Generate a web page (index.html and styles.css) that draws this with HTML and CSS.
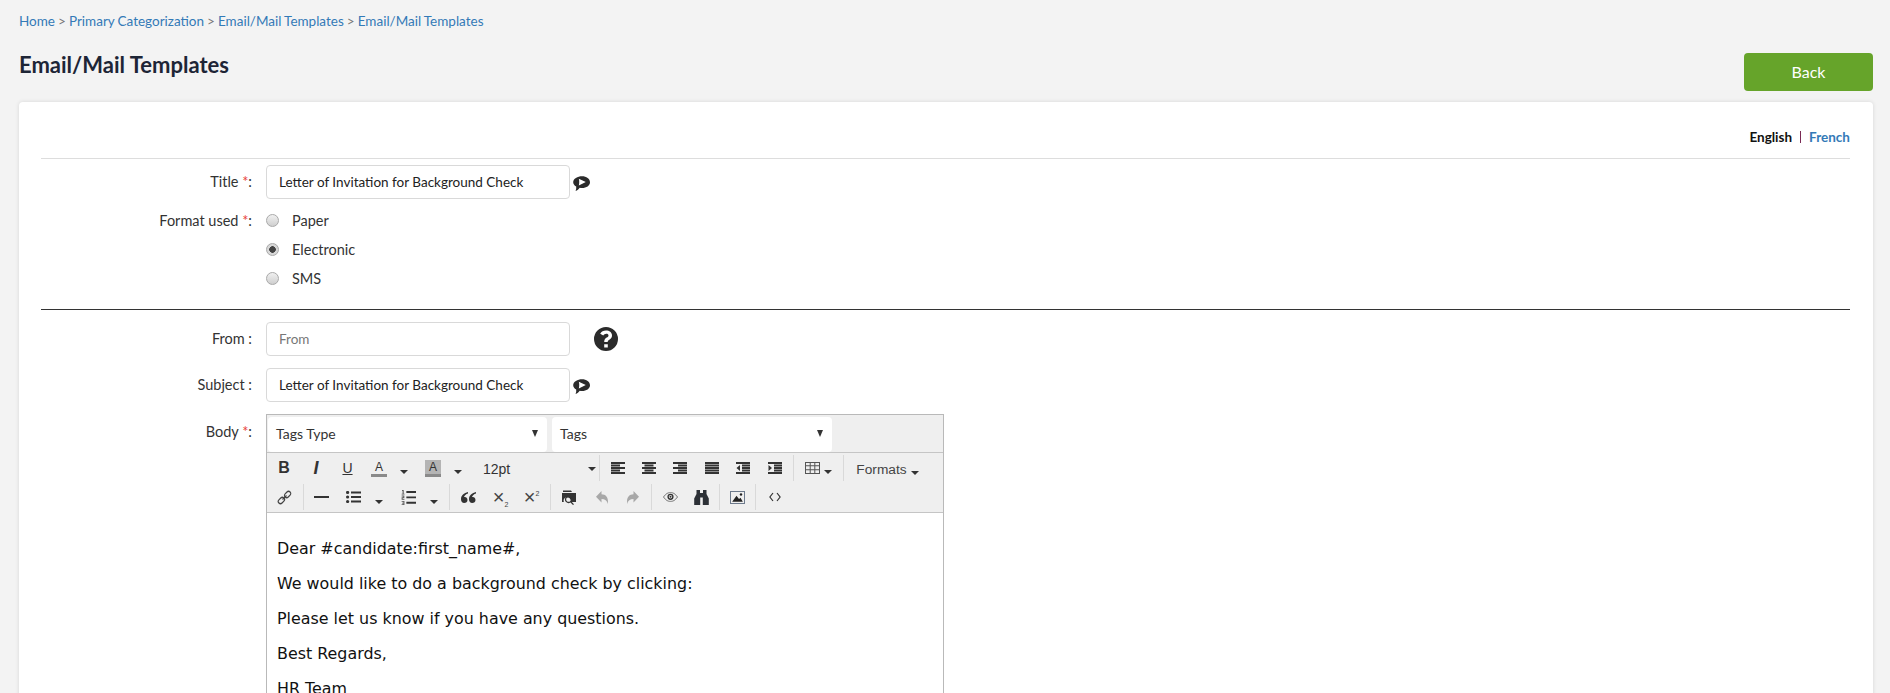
FILE: index.html
```html
<!DOCTYPE html>
<html lang="en">
<head>
<meta charset="utf-8">
<title>Email/Mail Templates</title>
<link rel="stylesheet" href="styles.css">
</head>
<body>
<svg class="defs" width="0" height="0" aria-hidden="true">
  <defs>
    <symbol id="bubble" viewBox="0 0 17 15">
      <path fill="#2b2b2b" d="M9 0.300C13.400 0.300 17 2.900 17 6.200C17 9.500 13.400 12 9 12C8.200 12 7.400 11.900 6.700 11.700C5.800 13.300 4.200 14.500 2.600 15C3.200 13.600 3.400 12 3.200 10.500C1.300 9.400 0.200 7.900 0.200 6.200C0.200 2.900 4.600 0.300 9 0.300Z"/>
      <path fill="#fff" d="M5.800 2.800L12.800 6.100L5.800 9.400C6.400 7.300 6.400 4.900 5.800 2.800Z"/>
    </symbol>
    <symbol id="help" viewBox="0 0 24 24">
      <path fill="#2b2b2b" fill-rule="evenodd" d="M12 0a12 12 0 1 0 0 24a12 12 0 0 0 0-24ZM10.200 17.200h3.600v3.400h-3.600ZM12 3.600c3.400 0 6 2 6 4.900c0 2.200-1.200 3.300-2.700 4.200c-1.100.7-1.600 1.200-1.600 2.400h-3.500c0-2.400.9-3.500 2.500-4.500c1.100-.7 1.800-1.200 1.800-2.200c0-1-.9-1.700-2.200-1.700c-1.300 0-2.300.7-3 1.800L6.200 6.700C7.400 4.800 9.400 3.600 12 3.600Z"/>
    </symbol>
    <symbol id="al" viewBox="0 0 14 12"><path fill="#333" d="M0 0h14v2H0zM0 2.500h9v2H0zM0 5h14v2H0zM0 7.500h9v2H0zM0 10h14v2H0z"/></symbol>
    <symbol id="ac" viewBox="0 0 14 12"><path fill="#333" d="M0 0h14v2H0zM2.500 2.500h9v2h-9zM0 5h14v2H0zM2.500 7.500h9v2h-9zM0 10h14v2H0z"/></symbol>
    <symbol id="ar" viewBox="0 0 14 12"><path fill="#333" d="M0 0h14v2H0zM5 2.500h9v2H5zM0 5h14v2H0zM5 7.500h9v2H5zM0 10h14v2H0z"/></symbol>
    <symbol id="aj" viewBox="0 0 14 12"><path fill="#333" d="M0 0h14v2H0zM0 2.500h14v2H0zM0 5h14v2H0zM0 7.500h14v2H0zM0 10h14v2H0z"/></symbol>
    <symbol id="out" viewBox="0 0 14 12"><path fill="#333" d="M0 0h14v2H0zM6 2.500h8v2H6zM6 5h8v2H6zM6 7.500h8v2H6zM0 10h14v2H0zM4 3v6L0.500 6z"/></symbol>
    <symbol id="ind" viewBox="0 0 14 12"><path fill="#333" d="M0 0h14v2H0zM6 2.500h8v2H6zM6 5h8v2H6zM6 7.500h8v2H6zM0 10h14v2H0zM0.500 3v6L4 6z"/></symbol>
    <symbol id="table" viewBox="0 0 15 12"><path fill="#555" d="M0 0h15v12H0zM1 1v2.300h3.700V1zM5.700 1v2.300h3.600V1zM10.300 1v2.300H14V1zM1 4.300v2.900h3.700V4.300zM5.700 4.300v2.900h3.600V4.300zM10.300 4.300v2.900H14V4.300zM1 8.200V11h3.700V8.200zM5.700 8.200V11h3.600V8.200zM10.300 8.200V11H14V8.200z" fill-rule="evenodd"/></symbol>
    <symbol id="link" viewBox="0 0 15 15"><g fill="none" stroke="#444" stroke-width="1.200"><rect x="0.900" y="8.300" width="7" height="4.400" rx="2.200" transform="rotate(-45 4.400 10.500)"/><rect x="7.100" y="2.300" width="7" height="4.400" rx="2.200" transform="rotate(-45 10.600 4.500)"/><path d="M5.500 9.500L9.500 5.500"/></g></symbol>
    <symbol id="bul" viewBox="0 0 15 12"><path fill="#333" d="M5 0.500h10v2H5zM5 5h10v2H5zM5 9.500h10v2H5z"/><circle fill="#333" cx="1.600" cy="1.500" r="1.600"/><circle fill="#333" cx="1.600" cy="6" r="1.600"/><circle fill="#333" cx="1.600" cy="10.500" r="1.600"/></symbol>
    <symbol id="num" viewBox="0 0 14 14"><path fill="#333" d="M5 1h9v1.800H5zM5 6h9v1.800H5zM5 11h9v1.800H5z"/><path fill="#555" d="M1 0h1.500v3.500H3.300v.8H.6v-.8h.9V1H1zM.6 5.200h2.500v2.300H1.500v.7h1.700V9H.6V6.800h1.600v-.8H.6zM.6 10.200h2.600V14H.6v-.8h1.700v-.7H1v-.7h1.300V11H.6z"/></symbol>
    <symbol id="quote" viewBox="0 0 15 11"><path fill="#333" d="M7 0C3 1 0 3.300 0 7.200C0 9.400 1.300 11 3.200 11S6.500 9.700 6.500 7.900C6.500 6.100 5.200 5 3.800 5C3.500 5 3.200 5 3 5.100C3.400 3.500 5 2.300 7 1.600zM15 0C11 1 8 3.300 8 7.200C8 9.400 9.300 11 11.200 11S14.500 9.700 14.500 7.900C14.500 6.100 13.200 5 11.800 5C11.500 5 11.200 5 11 5.100C11.400 3.500 13 2.300 15 1.600z"/></symbol>
    <symbol id="folder" viewBox="0 0 15 15"><path fill="#333" d="M0 3h14v9H8.800a3.800 3.800 0 0 0-5-4.500a3.800 3.800 0 0 0-2 4.500H0zM1 0.500h8L10 2H1z"/><path fill="none" stroke="#333" stroke-width="1.300" d="M6.500 6.500a3 3 0 1 0 .1 6a3 3 0 0 0-.1-6zM8.700 11.800L11.500 14.600"/></symbol>
    <symbol id="undo" viewBox="0 0 12 13"><path fill="#a8a8a8" d="M5.500 0V3.200C9.500 3.200 12 6 12 10.500L12 13C11 9.500 9 8 5.500 8V11.500L0 5.700Z"/></symbol>
    <symbol id="redo" viewBox="0 0 12 13"><path fill="#a8a8a8" d="M6.500 0V3.200C2.500 3.200 0 6 0 10.500L0 13C1 9.500 3 8 6.500 8V11.500L12 5.700Z"/></symbol>
    <symbol id="eye" viewBox="0 0 15 10"><path fill="none" stroke="#666" stroke-width=".9" d="M0.500 5C3 1.500 5 .6 7.500.6S12 1.500 14.500 5C12 8.500 10 9.400 7.500 9.400S3 8.500 .5 5Z"/><circle fill="none" stroke="#333" stroke-width="1.400" cx="7.500" cy="4.800" r="2.400"/><circle fill="#333" cx="7.500" cy="4.800" r="1"/></symbol>
    <symbol id="bino" viewBox="0 0 15 15"><path fill="#2c3036" d="M2.500 0H6V3H9V0H12.500V4L14.800 8.500V15H8.800V7.500H6.200V15H.2V8.500L2.500 4Z"/></symbol>
    <symbol id="img" viewBox="0 0 15 13"><path fill="#6d7a8c" fill-rule="evenodd" d="M0 0h15v13H0zM1 1v11h13V1z"/><path fill="#222" d="M2.200 10.800L6.500 4.800L9 8L10.500 6.800L12.800 10.800z"/><circle fill="#222" cx="11" cy="3.500" r="1.200"/></symbol>
    <symbol id="code" viewBox="0 0 12 10"><path fill="none" stroke="#333" stroke-width="1.200" d="M4 1L.9 5L4 9M8 1L11.100 5L8 9"/></symbol>
  </defs>
</svg>

<nav class="crumbs"><a href="#">Home</a> &gt; <a href="#">Primary Categorization</a> &gt; <a href="#">Email/Mail Templates</a> &gt; <a href="#">Email/Mail Templates</a></nav>

<header class="head">
  <h1>Email/Mail Templates</h1>
  <a class="back" href="#">Back</a>
</header>

<main class="card">
  <div class="lang"><strong>English</strong><i class="pipe"></i><a href="#">French</a></div>

  <div class="row first">
    <label class="lbl">Title <span class="req">*</span>:</label>
    <input class="field" type="text" value="Letter of Invitation for Background Check">
    <svg class="ic-bubble"><use href="#bubble"/></svg>
  </div>

  <div class="row radios">
    <label class="lbl line">Format used <span class="req">*</span>:</label>
    <div class="opts">
      <label class="opt"><input type="radio" name="fmt"><span>Paper</span></label>
      <label class="opt"><input type="radio" name="fmt" checked><span>Electronic</span></label>
      <label class="opt"><input type="radio" name="fmt"><span>SMS</span></label>
    </div>
  </div>

  <hr class="dark">

  <div class="row">
    <label class="lbl">From :</label>
    <input class="field" type="text" placeholder="From">
    <svg class="ic-help"><use href="#help"/></svg>
  </div>

  <div class="row gap">
    <label class="lbl">Subject :</label>
    <input class="field" type="text" value="Letter of Invitation for Background Check">
    <svg class="ic-bubble"><use href="#bubble"/></svg>
  </div>

  <div class="row gap body-row">
    <label class="lbl top">Body <span class="req">*</span>:</label>
    <div class="editor">
      <div class="tags">
        <div class="sel">Tags Type<i class="arrow"></i></div>
        <div class="sel">Tags<i class="arrow"></i></div>
      </div>
      <div class="tools">
        <div class="tr r1">
          <span class="b w32 tb">B</span>
          <span class="b w32 ti">I</span>
          <span class="b w31 tu">U</span>
          <span class="b w32"><span class="ta">A</span></span><span class="b w18"><i class="caret"></i></span>
          <span class="b w4"></span>
          <span class="b w32"><span class="ta hl">A</span></span><span class="b w18"><i class="caret"></i></span>
          <span class="b w4"></span>
          <span class="size">12pt<i class="caret"></i></span>
          <i class="sep"></i>
          <span class="b wa"><svg class="i14"><use href="#al"/></svg></span>
          <span class="b wa"><svg class="i14"><use href="#ac"/></svg></span>
          <span class="b wa"><svg class="i14"><use href="#ar"/></svg></span>
          <span class="b wa"><svg class="i14"><use href="#aj"/></svg></span>
          <span class="b wa"><svg class="i14"><use href="#out"/></svg></span>
          <span class="b wa"><svg class="i14"><use href="#ind"/></svg></span>
          <i class="sep"></i>
          <span class="b w44"><svg class="i15"><use href="#table"/></svg><i class="caret tight"></i></span>
          <i class="sep"></i>
          <span class="fmts">Formats<i class="caret tight"></i></span>
        </div>
        <div class="tr r2">
          <span class="b w32"><svg class="i15s"><use href="#link"/></svg></span>
          <i class="sep"></i>
          <span class="b w30"><i class="rule"></i></span>
          <span class="b w34"><svg class="i15"><use href="#bul"/></svg></span><span class="b w18 lo"><i class="caret"></i></span><span class="b w3"></span>
          <span class="b w34"><svg class="i15s"><use href="#num"/></svg></span><span class="b w18 lo"><i class="caret"></i></span><span class="b w3"></span>
          <i class="sep"></i>
          <span class="b w33"><svg class="iq"><use href="#quote"/></svg></span>
          <span class="b w31 tx"><span>&times;<sub>2</sub></span></span>
          <span class="b w31 tx"><span>&times;<sup>2</sup></span></span>
          <i class="sep"></i>
          <span class="b w33"><svg class="i15s"><use href="#folder"/></svg></span>
          <span class="b w31"><svg class="iu"><use href="#undo"/></svg></span>
          <span class="b w31"><svg class="iu"><use href="#redo"/></svg></span>
          <i class="sep"></i>
          <span class="b w32"><svg class="ie"><use href="#eye"/></svg></span>
          <span class="b w30"><svg class="ib"><use href="#bino"/></svg></span>
          <i class="sep"></i>
          <span class="b w30"><svg class="im"><use href="#img"/></svg></span>
          <i class="sep"></i>
          <span class="b w34"><svg class="ic"><use href="#code"/></svg></span>
        </div>
      </div>
      <div class="content">
        <p>Dear #candidate:first_name#,</p>
        <p>We would like to do a background check by clicking:</p>
        <p>Please let us know if you have any questions.</p>
        <p>Best Regards,</p>
        <p>HR Team</p>
      </div>
    </div>
  </div>
</main>
</body>
</html>
```

FILE: styles.css
```css
* { box-sizing: border-box; }
html, body { height: 693px; overflow: hidden; }
body {
  margin: 0;
  padding: 0 17px 0 19px;
  background: #f3f3f3;
  color: #333;
  font: 14px/18px Lato, sans-serif;
}
a { color: #337ab7; text-decoration: none; }
.defs { position: absolute; }

.crumbs { padding-top: 12px; height: 30px; color: #777; font-size: 13.500px; word-spacing: -0.400px; }

.head { display: flex; justify-content: space-between; align-items: center; height: 38px; margin-top: 23px; }
.head h1 { margin: 0; font-size: 22px; line-height: 26px; font-weight: 700; color: #1d2536; position: relative; top: -7px; }
.back {
  width: 129px; height: 38px; line-height: 38px; text-align: center;
  background: #66a42a; color: #fff; font-size: 16px; border-radius: 4px;
}

.card {
  margin-top: 11px;
  height: 620px;
  padding: 0 23px 0 22px;
  background: #fff;
  border-radius: 4px;
  box-shadow: 0 0 4px rgba(0,0,0,.12);
}

.lang {
  display: flex; justify-content: flex-end; align-items: center;
  height: 57px; padding-top: 14px;
  border-bottom: 1px solid #ddd;
  font-size: 13.500px; color: #111;
}
.lang strong { font-weight: 700; color: #111; }
.lang a { font-weight: 700; }
.pipe { width: 1px; height: 12px; background: #7a2a55; margin: 0 8px; }

.row { display: flex; align-items: center; }
.row.first { margin-top: 6px; }
.row.gap { margin-top: 12px; }
.row.radios { align-items: flex-start; margin-top: 7px; }
.row.body-row { align-items: flex-start; }

.lbl { width: 211px; margin-right: 14px; text-align: right; color: #333; font-size: 14.500px; flex: none; }
.lbl.line { line-height: 29px; }
.lbl.top { padding-top: 9px; }
.req { color: #e8453c; }

.field {
  width: 304px; height: 34px; padding: 0 12px 0 12px;
  border: 1px solid #d9d9d9; border-radius: 4px; background: #fff;
  color: #222; font: 13.500px Lato, sans-serif; outline: 0;
}
.field::placeholder { color: #777; opacity: 1; }
.ic-bubble { width: 17px; height: 15px; margin: 3px 0 0 3px; }
.ic-help { width: 24px; height: 24px; margin-left: 24px; }

.opt { display: flex; align-items: center; height: 29px; font-size: 14.500px; }
.opt input {
  appearance: none; margin: 0 13px 0 0; width: 13px; height: 13px; border-radius: 50%;
  border: 1px solid #a9a9a9; background: linear-gradient(#f0f0f0, #cfcfcf);
}
.opt input:checked { background: radial-gradient(circle, #444 0 3px, #d8d8d8 3.600px); }

.dark { margin: 16px 0 12px; border: 0; border-top: 1px solid #333; }

.editor { width: 678px; height: 400px; border: 1px solid #b9b9b9; border-bottom: 0; flex: none; background: #fff; }
.tags { display: flex; gap: 5px; height: 38px; padding: 2px 0 0 1px; background: #efefef; border-bottom: 1px solid #c5c5c5; }
.sel {
  position: relative; height: 35px; line-height: 34px; padding-left: 8px;
  background: #fff; border-radius: 4px; font-size: 14px; color: #333;
}
.sel:first-child { width: 279px; }
.sel:nth-child(2) { width: 280px; }
.arrow {
  position: absolute; right: 9px; top: 13px;
  border-style: solid; border-width: 7px 3.500px 0; border-color: #333 transparent transparent;
}
.tools { height: 60px; background: #efefef; border-bottom: 1px solid #c5c5c5; padding-left: 1px; }
.tr { display: flex; align-items: center; }
.r1 { height: 30px; }
.r2 { height: 28px; }
.b { display: flex; align-items: center; justify-content: center; height: 26px; flex: none; color: #333; }
.w3 { width: 3px; } .w4 { width: 4px; } .w18 { width: 18px; } .w30 { width: 30px; } .w31 { width: 31px; }
.w32 { width: 32px; } .w33 { width: 33px; } .w34 { width: 34px; } .w44 { width: 44px; } .wa { width: 31.400px; }
.tb { font: 700 16px "Liberation Sans", sans-serif; }
.ti { font: italic 700 18px "Liberation Sans", sans-serif; }
.tu { font: 14px "Liberation Sans", sans-serif; text-decoration: underline; }
.ta { display: inline-block; width: 16px; height: 17px; font: 12px/14px "Liberation Sans", sans-serif; text-align: center; border-bottom: 3px solid #8a8a8a; }
.hl { background: linear-gradient(#b4b4b4 14px, transparent 14px); }
.caret { display: block; border-style: solid; border-width: 4px 4px 0; border-color: #333 transparent transparent; margin-top: 7px; }
.caret.tight { margin: 7px 0 0 4px; }
.lo .caret { margin-top: 9px; }
.size {
  display: flex; justify-content: space-between; align-items: center; width: 125px; height: 26px; flex: none;
  padding: 2px 0 0 12px; font: 14px "Liberation Sans", sans-serif; color: #333;
}
.size .caret { margin: 0; }
.fmts { display: flex; align-items: center; padding: 2px 0 0 10px; font: 13.700px "Liberation Sans", sans-serif; color: #444; }
.sep { width: 1px; height: 26px; margin: 0 2px 0 3px; background: #d9d9d9; flex: none; }
.i14 { width: 14px; height: 12px; }
.i15 { width: 15px; height: 12px; }
.i15s { width: 15px; height: 15px; }
.iq { width: 15px; height: 11px; }
.iu { width: 12px; height: 13px; }
.ie { width: 15px; height: 10px; }
.ib { width: 15px; height: 15px; }
.im { width: 15px; height: 13px; }
.ic { width: 12px; height: 10px; }
.rule { width: 15px; height: 2px; background: #333; }
.tx { font: 20px/16px "Liberation Sans", sans-serif; color: #444; }
.tx sub { font-size: 7px; line-height: 0; vertical-align: -3px; }
.tx sup { font-size: 7px; line-height: 0; vertical-align: 8px; }

.content { padding: 10px 8px 0 10px; font: 15.900px/19px "DejaVu Sans", Verdana, sans-serif; color: #111; height: 200px; }
.content p { margin: 16px 0; }
```
